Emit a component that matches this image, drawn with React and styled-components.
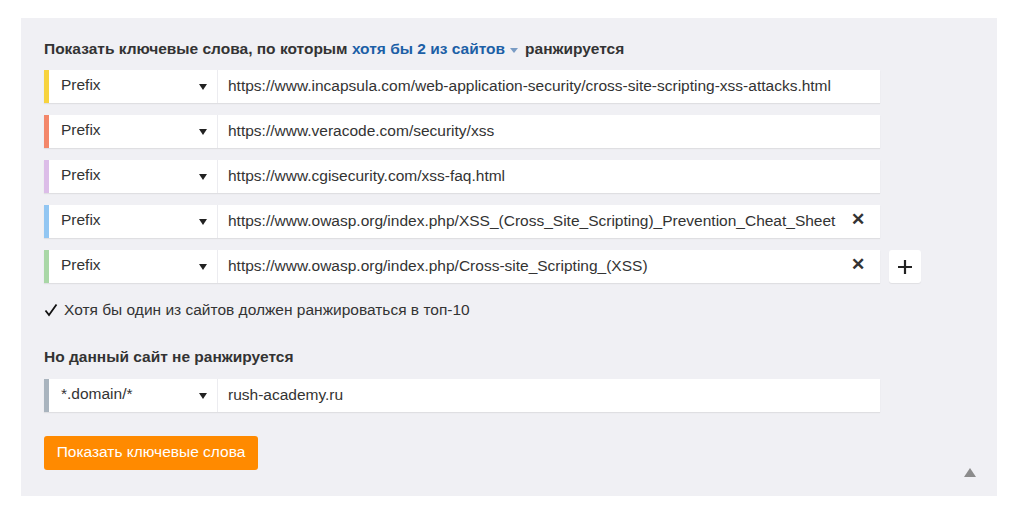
import React from "react";
import styled, { createGlobalStyle } from "styled-components";

const GlobalStyle = createGlobalStyle`
  html, body {
    margin: 0;
    padding: 0;
    background: #ffffff;
    font-family: "Liberation Sans", Arial, sans-serif;
    color: #333333;
  }
`;

const Page = styled.div`
  width: 1024px;
  height: 521px;
  padding: 18px 27px 25px 21px;
  box-sizing: border-box;
`;

const Panel = styled.div`
  height: 100%;
  background: #f0f0f4;
  padding: 21px 23px 0 23px;
  box-sizing: border-box;
  display: flex;
  flex-direction: column;
`;

const Heading = styled.div`
  font-size: 15.5px;
  font-weight: bold;
  line-height: 20px;
  margin-top: ${(p) => p.top || 0}px;
  color: #333;
  display: flex;
  align-items: center;
  white-space: pre;
`;

const LinkText = styled.span`
  color: #1c5fa6;
  display: inline-flex;
  align-items: center;
`;

const SmallCaret = styled.span`
  width: 0;
  height: 0;
  border-left: 4px solid transparent;
  border-right: 4px solid transparent;
  border-top: 5px solid #7a9cc4;
  margin: 2px 7px 0 5px;
`;

const Rows = styled.div`
  display: flex;
  flex-direction: column;
  gap: 12px;
  margin-top: ${(p) => p.top || 0}px;
`;

const RowLine = styled.div`
  display: flex;
  align-items: stretch;
  gap: 9px;
`;

const Field = styled.div`
  width: 836px;
  height: 33px;
  display: flex;
  background: #ffffff;
  border-left: 5px solid ${(p) => p.color};
  box-shadow: 0 1px 1px rgba(0, 0, 0, 0.07);
  box-sizing: border-box;
  font-size: 15.5px;
`;

const Select = styled.div`
  width: 169px;
  display: flex;
  align-items: center;
  justify-content: space-between;
  padding: 0 10px 3px 12px;
  box-sizing: border-box;
  border-right: 1px solid #ececf0;
`;

const Caret = styled.span`
  width: 0;
  height: 0;
  border-left: 4.5px solid transparent;
  border-right: 4.5px solid transparent;
  border-top: 6px solid #222;
  margin-top: 4px;
`;

const Input = styled.div`
  flex: 1;
  display: flex;
  align-items: center;
  justify-content: space-between;
  padding: 0 15px 2px 10px;
  white-space: nowrap;
`;

const Remove = styled.span`
  font-size: 17px;
  font-weight: bold;
  color: #333;
  line-height: 1;
  margin-top: -3px;
`;

const AddButton = styled.div`
  width: 32px;
  height: 33px;
  background: #ffffff;
  border-radius: 3px;
  box-shadow: 0 1px 1px rgba(0, 0, 0, 0.07);
  display: flex;
  align-items: center;
  justify-content: center;
`;

const Check = styled.div`
  margin-top: 17px;
  display: flex;
  align-items: center;
  gap: 6px;
  font-size: 15.5px;
  line-height: 20px;
  color: #333;
`;

const Footer = styled.div`
  margin-top: 24px;
  display: flex;
  justify-content: space-between;
  align-items: flex-start;
`;

const Submit = styled.button`
  height: 34px;
  width: 214px;
  border: none;
  border-radius: 3px;
  background: #ff8a00;
  color: #ffffff;
  font-family: "Liberation Sans", Arial, sans-serif;
  font-size: 15.5px;
  padding: 0 0 2px 0;
`;

const UpArrow = styled.span`
  width: 0;
  height: 0;
  border-left: 6px solid transparent;
  border-right: 6px solid transparent;
  border-bottom: 9px solid #8c8c8c;
  margin: 32px -2px 0 0;
`;

const sites = [
  { color: "#f7d33e", url: "https://www.incapsula.com/web-application-security/cross-site-scripting-xss-attacks.html" },
  { color: "#f3876a", url: "https://www.veracode.com/security/xss" },
  { color: "#dcbde8", url: "https://www.cgisecurity.com/xss-faq.html" },
  { color: "#92c6f2", url: "https://www.owasp.org/index.php/XSS_(Cross_Site_Scripting)_Prevention_Cheat_Sheet", remove: true },
  { color: "#a9d7a6", url: "https://www.owasp.org/index.php/Cross-site_Scripting_(XSS)", remove: true, add: true },
];

const App = () => {
  return (
    <Page>
      <GlobalStyle />
      <Panel>
        <Heading>
          {"Показать ключевые слова, по которым "}
          <LinkText>
            хотя бы 2 из сайтов
            <SmallCaret />
          </LinkText>
          ранжируется
        </Heading>
        <Rows top={11}>
          {sites.map((site, index) => (
            <RowLine key={index}>
              <Field color={site.color}>
                <Select>
                  Prefix
                  <Caret />
                </Select>
                <Input>
                  <span>{site.url}</span>
                  {site.remove ? <Remove>✕</Remove> : null}
                </Input>
              </Field>
              {site.add ? (
                <AddButton>
                  <svg width="16" height="16" viewBox="0 0 16 16">
                    <path d="M8 1v14M1 8h14" stroke="#222" strokeWidth="2.2" />
                  </svg>
                </AddButton>
              ) : null}
            </RowLine>
          ))}
        </Rows>
        <Check>
          <svg width="14" height="14" viewBox="0 0 14 14">
            <path d="M1.5 7.5l3.5 4.5L12.5 1.5" fill="none" stroke="#111" strokeWidth="1.8" />
          </svg>
          Хотя бы один из сайтов должен ранжироваться в топ-10
        </Check>
        <Heading top={27}>Но данный сайт не ранжируется</Heading>
        <Rows top={12}>
          <RowLine>
            <Field color="#a9b4be">
              <Select>
                *.domain/*
                <Caret />
              </Select>
              <Input>
                <span>rush-academy.ru</span>
              </Input>
            </Field>
          </RowLine>
        </Rows>
        <Footer>
          <Submit>Показать ключевые слова</Submit>
          <UpArrow />
        </Footer>
      </Panel>
    </Page>
  );
};

export default App;
